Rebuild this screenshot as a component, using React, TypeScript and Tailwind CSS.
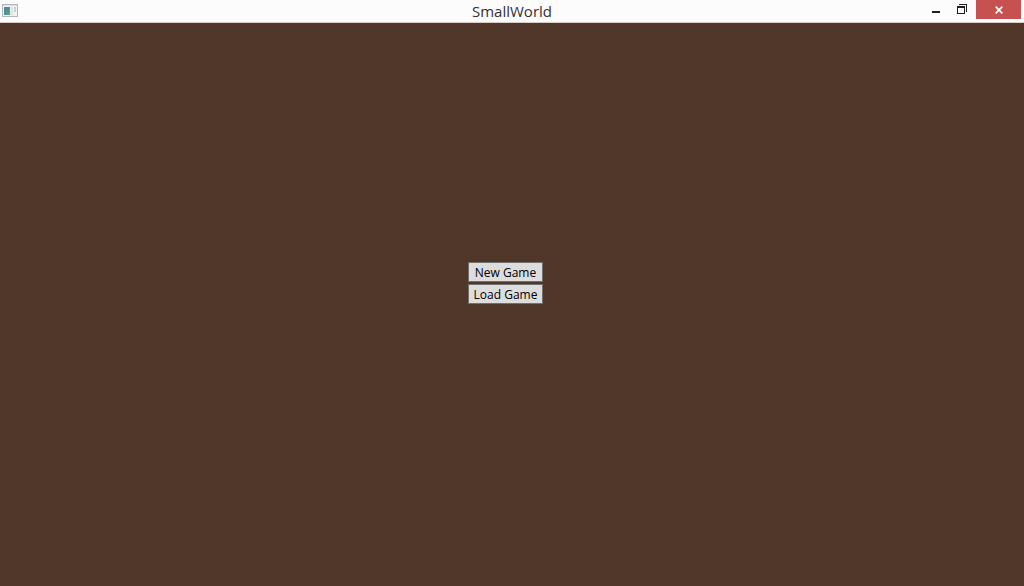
function AppIcon() {
  return (
    <svg width="16" height="14" viewBox="0 0 16 14" shapeRendering="crispEdges" aria-hidden="true">
      <defs>
        <linearGradient id="pane" x1="0" y1="0" x2="1" y2="1">
          <stop offset="0" stopColor="#4a7fa5" />
          <stop offset="1" stopColor="#5fa57f" />
        </linearGradient>
      </defs>
      <rect width="16" height="13" fill="#b4b6bd" />
      <rect x="1" y="1" width="14" height="11" fill="#f1f2f4" />
      <rect x="1" y="1" width="14" height="1" fill="#dcdfe6" />
      <rect x="2" y="3" width="6" height="8" fill="url(#pane)" />
      <rect x="9" y="3" width="2" height="8" fill="#dfe3df" />
      <rect x="12" y="3" width="2" height="5" fill="#c3dacb" />
    </svg>
  );
}

const menuButton =
  "h-5 border border-[#707070] bg-[#dddddd] px-1 pt-px text-xs leading-4 text-black hover:bg-[#bee6fd]";

export default function App() {
  return (
    <div className="flex min-h-screen flex-col bg-[#50372a] font-['Open_Sans','Noto_Sans',sans-serif]">
      <header className="grid h-[23px] grid-cols-[1fr_auto_1fr] items-start border-b border-[#d9cdc8] bg-[#fcfcfc]">
        <div className="pt-1 pl-0.5">
          <AppIcon />
        </div>
        <h1 className="text-[15px] leading-[22px] text-[#333333]">SmallWorld</h1>
        <div className="flex justify-end pr-[3px]">
          <button type="button" aria-label="Minimize" className="flex h-[19px] w-6 items-center justify-center">
            <svg width="10" height="10" viewBox="0 0 10 10" shapeRendering="crispEdges" aria-hidden="true">
              <path d="M1 6h8v2H1z" fill="#1f1f1f" />
            </svg>
          </button>
          <button type="button" aria-label="Restore" className="flex h-[18px] w-7 items-center justify-center">
            <svg width="10" height="10" viewBox="0 0 10 10" shapeRendering="crispEdges" aria-hidden="true">
              <path d="M2 0h8v8H9V1H2zM0 2h8v8H0zM1 4v5h6V4z" fillRule="evenodd" fill="#1f1f1f" />
            </svg>
          </button>
          <button
            type="button"
            aria-label="Close"
            className="flex h-[19px] w-[45px] items-center justify-center bg-[#c75050]"
          >
            <svg width="8" height="8" viewBox="0 0 8 8" aria-hidden="true">
              <path d="M.7.7l6.6 6.6M7.3.7L.7 7.3" stroke="#ffffff" strokeWidth="1.7" />
            </svg>
          </button>
        </div>
      </header>
      <main className="flex grow items-center justify-center pr-[13px] pb-[43px]">
        <div className="grid w-[75px] gap-0.5">
          <button type="button" className={menuButton}>
            New Game
          </button>
          <button type="button" className={menuButton}>
            Load Game
          </button>
        </div>
      </main>
    </div>
  );
}
